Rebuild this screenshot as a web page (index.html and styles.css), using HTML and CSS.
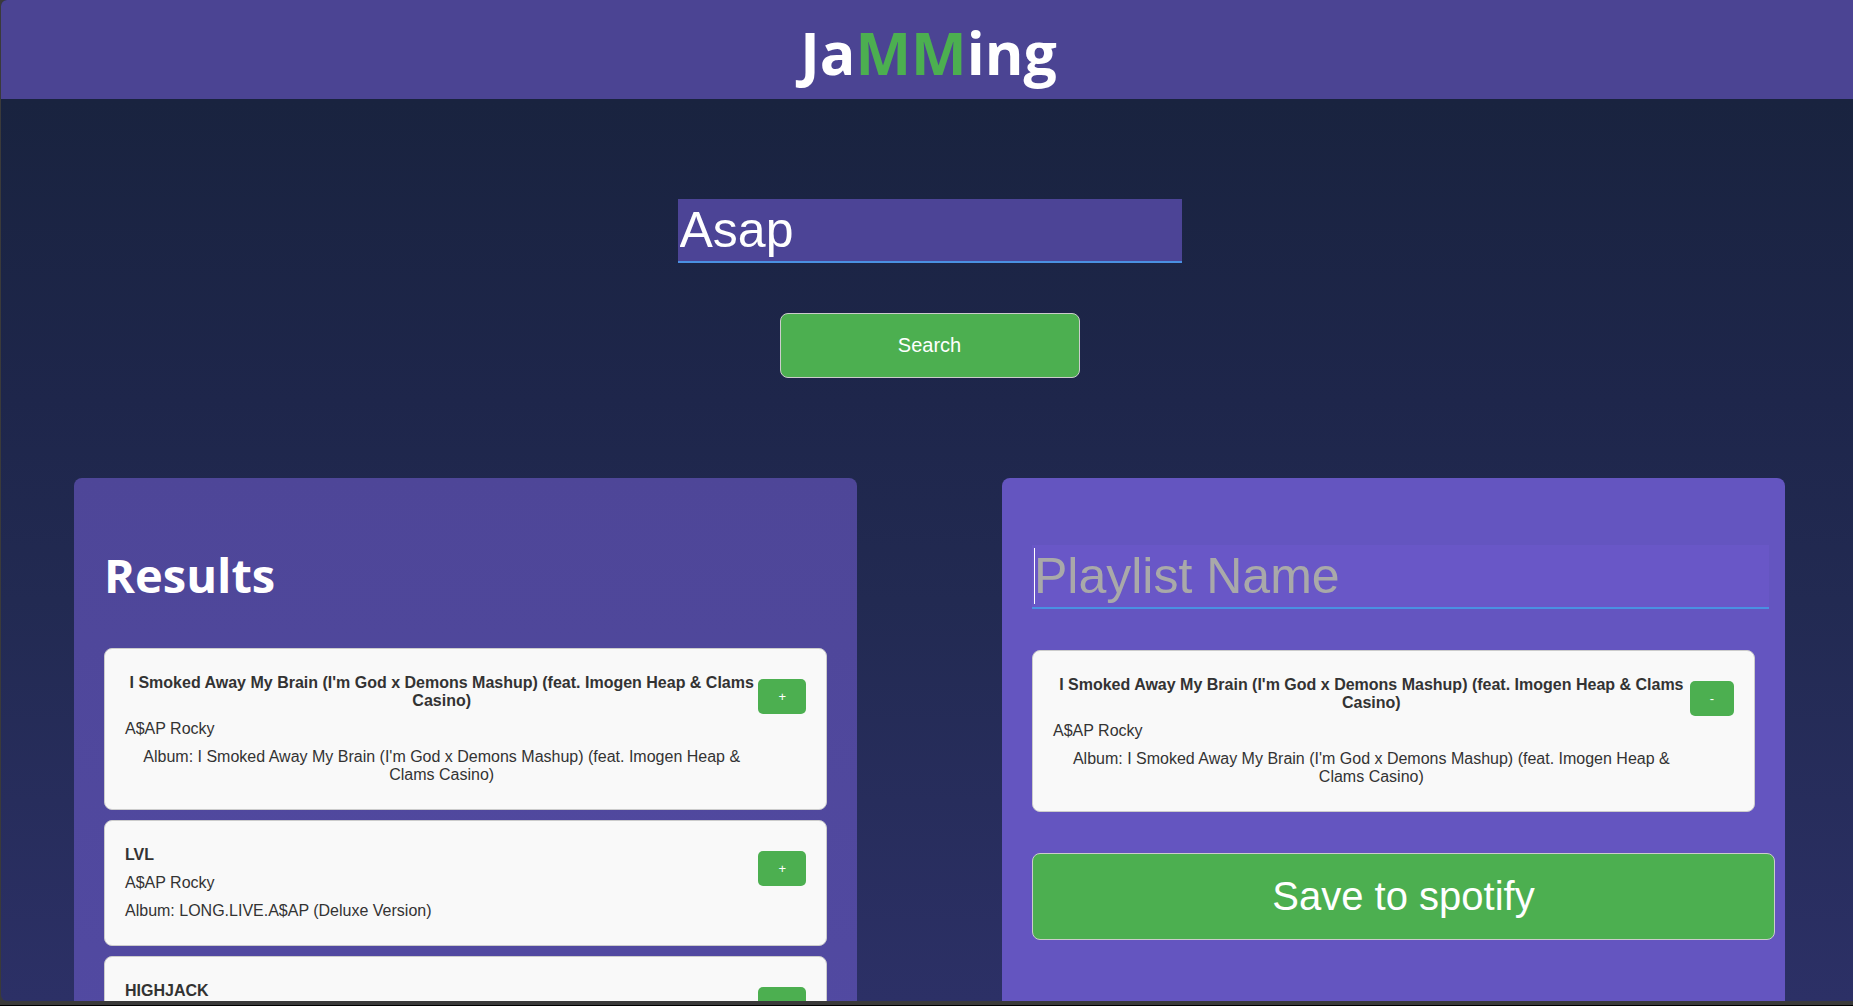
FILE: index.html
```html
<!DOCTYPE html>
<html lang="en">
<head>
  <meta charset="utf-8">
  <meta name="viewport" content="width=device-width, initial-scale=1">
  <title>Jamming</title>
  <link rel="stylesheet" href="styles.css">
</head>
<body>
  <div class="app">
    <header class="header">
      <h1 class="logo">Ja<span class="logo-accent">MM</span>ing</h1>
    </header>
    <main class="main">
      <form class="search">
        <input class="field search-field" type="text" value="Asap" aria-label="Search">
        <button class="button search-button" type="button">Search</button>
      </form>
      <div class="panels">
        <section class="panel results">
          <h2 class="panel-title">Results</h2>
          <ul class="tracks">
            <li class="track">
              <div class="track-info">
                <h3 class="track-name">I Smoked Away My Brain (I'm God x Demons Mashup) (feat. Imogen Heap &amp; Clams Casino)</h3>
                <p class="track-line">A$AP Rocky</p>
                <p class="track-line">Album: I Smoked Away My Brain (I'm God x Demons Mashup) (feat. Imogen Heap &amp; Clams Casino)</p>
              </div>
              <button class="track-button" type="button">+</button>
            </li>
            <li class="track">
              <div class="track-info">
                <h3 class="track-name">LVL</h3>
                <p class="track-line">A$AP Rocky</p>
                <p class="track-line">Album: LONG.LIVE.A$AP (Deluxe Version)</p>
              </div>
              <button class="track-button" type="button">+</button>
            </li>
            <li class="track">
              <div class="track-info">
                <h3 class="track-name">HIGHJACK</h3>
              </div>
              <button class="track-button" type="button">+</button>
            </li>
          </ul>
        </section>
        <section class="panel playlist">
          <div class="playlist-name">
            <input class="field" type="text" placeholder="Playlist Name" aria-label="Playlist Name">
          </div>
          <ul class="tracks">
            <li class="track">
              <div class="track-info">
                <h3 class="track-name">I Smoked Away My Brain (I'm God x Demons Mashup) (feat. Imogen Heap &amp; Clams Casino)</h3>
                <p class="track-line">A$AP Rocky</p>
                <p class="track-line">Album: I Smoked Away My Brain (I'm God x Demons Mashup) (feat. Imogen Heap &amp; Clams Casino)</p>
              </div>
              <button class="track-button" type="button">-</button>
            </li>
          </ul>
          <button class="button save-button" type="button">Save to spotify</button>
        </section>
      </div>
    </main>
  </div>
</body>
</html>
```

FILE: styles.css
```css
* {
  box-sizing: border-box;
}

body {
  margin: 0;
  height: 100vh;
  padding-left: 1px;
  border-bottom: 1px solid #000;
  background: #3a3a3a;
  font-family: "Liberation Sans", Arial, sans-serif;
  font-size: 16px;
  line-height: 18px;
  color: #333;
}

h1, h2, h3, p, ul {
  margin: 0;
  padding: 0;
}

.app {
  height: calc(100vh - 5px);
  overflow-y: auto;
  scrollbar-width: none;
  border-radius: 6px 0 0 6px;
  background: linear-gradient(#18213d 0%, #19233f 10%, #1e264b 40%, #222a52 60%, #2c3066 100%);
}

.header {
  padding: 17px 0 12px 3px;
  background: #4b4493;
  text-align: center;
}

.logo {
  font-family: "Open Sans", "Noto Sans", sans-serif;
  font-size: 59px;
  line-height: 70px;
  font-weight: 700;
  color: #fff;
}

.logo-accent {
  color: #4caf50;
}

.main {
  padding: 100px 68px 0 73px;
}

.search {
  display: flex;
  flex-direction: column;
  align-items: center;
  gap: 50px;
}

.field {
  display: block;
  width: 100%;
  height: 64px;
  padding: 1px 2px;
  border: 0;
  border-bottom: 2px solid #4a90e2;
  outline: 0;
  border-radius: 0;
  background: #4c4496;
  font-family: inherit;
  font-size: 50px;
  color: #fff;
}

.field::placeholder {
  color: #a9a9a9;
  opacity: 1;
}

.search-field {
  width: 504px;
}

.button {
  border: 1px solid #ccc;
  border-radius: 8px;
  background: #4caf50;
  font-family: inherit;
  color: #fff;
}

.search-button {
  width: 300px;
  height: 65px;
  font-size: 20px;
}

.panels {
  display: grid;
  grid-template-columns: 1fr 1fr;
  gap: 145px;
  margin-top: 100px;
}

.panel {
  padding: 67px 30px 30px;
  border-radius: 8px 8px 0 0;
}

.results {
  background: linear-gradient(#4e4698, #524aa3);
}

.playlist {
  background: #6455c0;
}

.panel-title {
  margin-bottom: 43px;
  font-family: "Open Sans", "Noto Sans", sans-serif;
  font-size: 47px;
  line-height: 60px;
  font-weight: 700;
  color: #fff;
}

.playlist-name {
  position: relative;
  width: calc(100% + 14px);
  margin-bottom: 41px;
}

/* text cursor */
.playlist-name::before {
  content: "";
  position: absolute;
  left: 2px;
  top: 3px;
  width: 1px;
  height: 56px;
  background: #fff;
}

.playlist-name .field {
  background: #6957c7;
}

.tracks {
  display: flex;
  flex-direction: column;
  gap: 10px;
  list-style: none;
}

.track {
  display: flex;
  align-items: flex-start;
  min-height: 126px;
  padding: 25px 20px;
  border: 1px solid #ccc;
  border-radius: 8px;
  background: #f9f9f9;
}

.track-info {
  flex: 1;
  display: flex;
  flex-direction: column;
  align-items: flex-start;
  gap: 10px;
  text-align: center;
}

.track-name {
  font-size: 16px;
  font-weight: 700;
}

.track-button {
  margin-top: 5px;
  padding: 10px 20px;
  border: 0;
  border-radius: 5px;
  background: #4caf50;
  font-family: inherit;
  font-size: 13px;
  line-height: 15px;
  color: #fff;
}

.save-button {
  width: calc(100% + 20px);
  height: 87px;
  margin-top: 41px;
  font-size: 40px;
}
```
